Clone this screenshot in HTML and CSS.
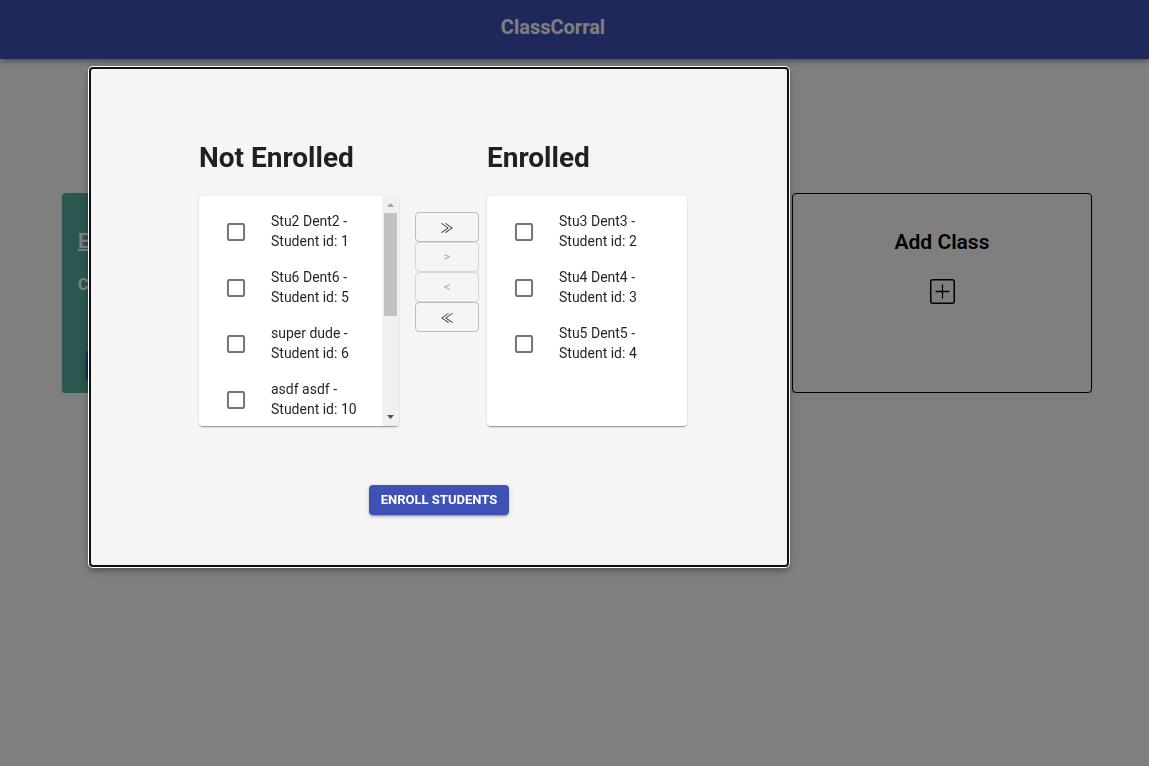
FILE: index.html
```
<!DOCTYPE html>
<html lang="en">
<head>
<meta charset="utf-8">
<title>ClassCorral</title>
<link rel="stylesheet" href="styles.css">
</head>
<body>
<header class="app-bar"><h1 class="brand">ClassCorral</h1></header>
<main class="classes">
  <section class="card class-card">
    <a class="class-name" href="#">E</a>
    <p class="class-info">C</p>
    <button class="class-action" type="button" aria-label="Open class"></button>
  </section>
  <section class="card add-card">
    <h2 class="add-title">Add Class</h2>
    <button class="add-button" type="button" aria-label="Add class">
      <svg width="25" height="25" viewBox="0 0 25 25" fill="none" stroke="currentColor" aria-hidden="true">
        <rect x="0.75" y="0.75" width="23.5" height="23.5" rx="2" stroke-width="1.5"/>
        <path d="M12.5 5.5v14M5.5 12.5h14" stroke-width="1.3"/>
      </svg>
    </button>
  </section>
</main>

<div class="backdrop">
  <div class="dialog" role="dialog" aria-modal="true" aria-label="Enroll students">
    <div class="transfer">
      <section class="column">
        <h2 class="column-title">Not Enrolled</h2>
        <div class="paper">
          <ul class="students">
            <li><label class="student"><input class="check" type="checkbox"><span>Stu2 Dent2 - Student id: 1</span></label></li>
            <li><label class="student"><input class="check" type="checkbox"><span>Stu6 Dent6 - Student id: 5</span></label></li>
            <li><label class="student"><input class="check" type="checkbox"><span>super dude - Student id: 6</span></label></li>
            <li><label class="student"><input class="check" type="checkbox"><span>asdf asdf - Student id: 10</span></label></li>
          </ul>
          <div class="scrollbar" aria-hidden="true">
            <svg class="arrow arrow-up" width="7" height="4" viewBox="0 0 7 4"><path d="M0 4L3.5 0L7 4z"/></svg>
            <div class="track"><div class="thumb"></div></div>
            <svg class="arrow" width="7" height="4" viewBox="0 0 7 4"><path d="M0 0L3.5 4L7 0z"/></svg>
          </div>
        </div>
      </section>
      <div class="moves">
        <button class="move move-all" type="button" aria-label="Move all right">≫</button>
        <button class="move" type="button" aria-label="Move selected right" disabled>&gt;</button>
        <button class="move" type="button" aria-label="Move selected left" disabled>&lt;</button>
        <button class="move move-all" type="button" aria-label="Move all left">≪</button>
      </div>
      <section class="column">
        <h2 class="column-title">Enrolled</h2>
        <div class="paper">
          <ul class="students">
            <li><label class="student"><input class="check" type="checkbox"><span>Stu3 Dent3 - Student id: 2</span></label></li>
            <li><label class="student"><input class="check" type="checkbox"><span>Stu4 Dent4 - Student id: 3</span></label></li>
            <li><label class="student"><input class="check" type="checkbox"><span>Stu5 Dent5 - Student id: 4</span></label></li>
          </ul>
        </div>
      </section>
    </div>
    <button class="enroll" type="button">Enroll Students</button>
  </div>
</div>
</body>
</html>
```
FILE: styles.css
```
* { box-sizing: border-box; }
body {
  margin: 0;
  background: #fff;
  color: rgba(0, 0, 0, 0.87);
  font-family: Roboto, "Liberation Sans", sans-serif;
  font-size: 14px;
  line-height: 20px;
}
h1, h2, p, ul { margin: 0; padding: 0; }
button { font-family: inherit; padding: 0; cursor: pointer; }

.app-bar {
  display: flex;
  justify-content: center;
  padding: 12px 43px 17px 0;
  background: #3f51b5;
  box-shadow: 0 2px 4px -1px rgba(0, 0, 0, 0.2), 0 4px 5px rgba(0, 0, 0, 0.14), 0 1px 10px rgba(0, 0, 0, 0.12);
}
.brand { color: #fff; font-size: 20px; line-height: 30px; font-weight: 700; }

.classes {
  display: flex;
  justify-content: space-between;
  padding: 134px 57px 0 62px;
}
.card {
  display: flex;
  flex-direction: column;
  width: 300px;
  min-height: 200px;
  border-radius: 4px;
  box-shadow: 0 2px 1px -1px rgba(0, 0, 0, 0.2), 0 1px 1px rgba(0, 0, 0, 0.14), 0 1px 3px rgba(0, 0, 0, 0.12);
}
.class-card { align-items: flex-start; padding: 32px 16px 12px; background: #55aea1; color: #fff; }
.class-name { color: inherit; font-size: 20px; line-height: 32px; font-weight: 700; }
.class-info { margin-top: 16px; font-size: 16px; line-height: 24px; font-weight: 700; }
.class-action {
  width: 64px;
  height: 30px;
  margin: auto 0 0 8px;
  border: 0;
  border-radius: 4px;
  background: #3f51b5;
  box-shadow: 0 1px 5px rgba(0, 0, 0, 0.3);
}
.add-card { align-items: center; padding: 32px 16px; border: 1px solid #000; color: #000; }
.add-title { font-size: 21px; line-height: 32px; font-weight: 600; }
.add-button { display: flex; margin-top: 21px; border: 0; background: none; color: #000; }

.backdrop { position: fixed; inset: 0; background: rgba(0, 0, 0, 0.5); }
.dialog {
  position: absolute;
  top: 67px;
  left: 89px;
  display: flex;
  flex-direction: column;
  align-items: center;
  width: 700px;
  padding: 71px 8px 50px;
  border: 2px solid #101010;
  border-radius: 4px;
  background: #f5f5f5;
  box-shadow: 0 0 0 1px #fff, 0 3px 5px rgba(0, 0, 0, 0.2), 0 5px 8px rgba(0, 0, 0, 0.14), 0 1px 14px rgba(0, 0, 0, 0.12);
}
.transfer { display: flex; gap: 16px; padding-left: 8px; }
.column { width: 200px; }
.column + .moves + .column { margin-left: -8px; }
.column-title { margin-bottom: 20px; font-size: 28px; line-height: 36px; font-weight: 700; white-space: nowrap; }
.paper {
  display: flex;
  height: 230px;
  overflow: hidden;
  border-radius: 4px;
  background: #fff;
  box-shadow: 0 2px 1px -1px rgba(0, 0, 0, 0.2), 0 1px 1px rgba(0, 0, 0, 0.14), 0 1px 3px rgba(0, 0, 0, 0.12);
}
.students { flex: 1; padding: 8px 0; list-style: none; }
.student { display: flex; align-items: center; gap: 26px; padding: 7px 16px 9px 28px; }
.student span { width: 92px; }
.check {
  flex: none;
  appearance: none;
  width: 18px;
  height: 18px;
  margin: 2px 0 0;
  border: 2px solid #757575;
  border-radius: 2px;
}
.scrollbar {
  display: flex;
  flex-direction: column;
  align-items: center;
  gap: 6px;
  width: 17px;
  padding: 7px 0;
  background: #f0f0f0;
}
.track { flex: 1; width: 13px; }
.thumb { height: 103px; background: #c1c1c1; }
.arrow { fill: #505050; }
.arrow-up { fill: #a3a3a3; }

.moves { display: flex; flex-direction: column; padding-top: 72px; }
.move {
  width: 64px;
  height: 30px;
  border: 1px solid rgba(0, 0, 0, 0.23);
  border-radius: 4px;
  background: none;
  color: rgba(0, 0, 0, 0.87);
  font-size: 13px;
  line-height: 22px;
  font-weight: 500;
}
.move-all { font-family: "Noto Sans CJK JP", sans-serif; font-weight: 400; }
.move:disabled { border-color: rgba(0, 0, 0, 0.12); color: rgba(0, 0, 0, 0.26); }

.enroll {
  margin-top: 59px;
  padding: 4px 12px;
  border: 0;
  border-radius: 4px;
  background: #3f51b5;
  color: #fff;
  font-size: 13px;
  line-height: 22px;
  font-weight: 700;
  text-transform: uppercase;
  box-shadow: 0 3px 1px -2px rgba(0, 0, 0, 0.2), 0 2px 2px rgba(0, 0, 0, 0.14), 0 1px 5px rgba(0, 0, 0, 0.12);
}
```
